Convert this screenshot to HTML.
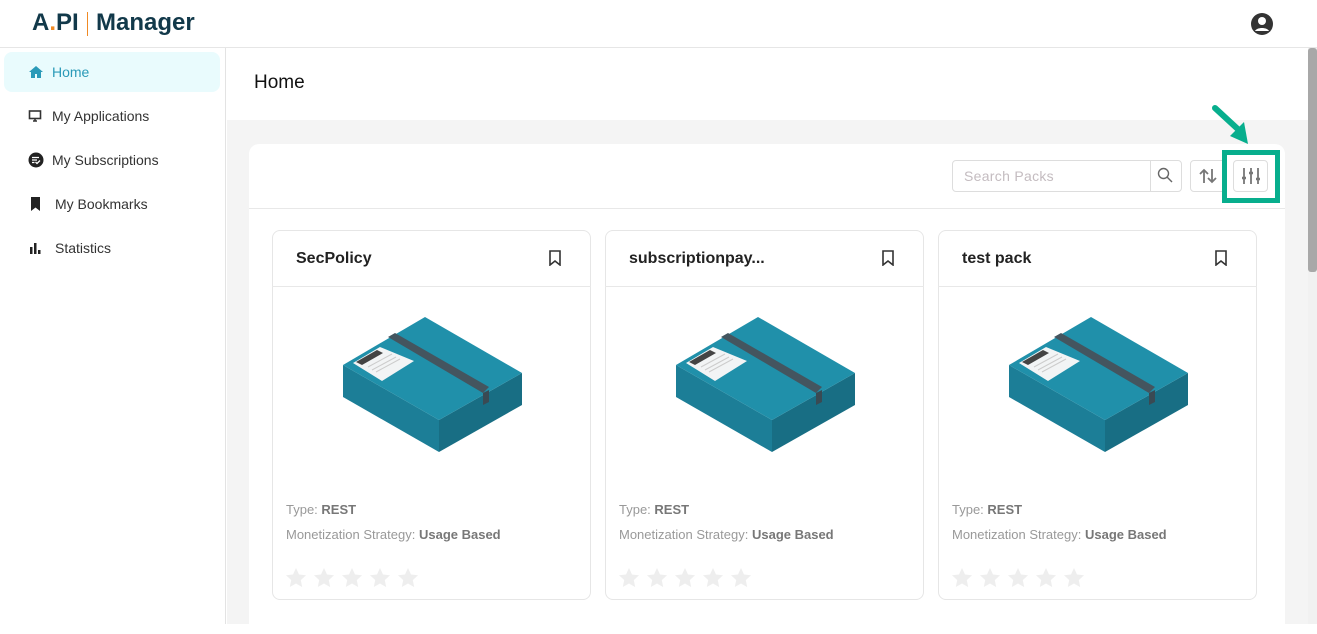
<!DOCTYPE html>
<html><head><style>
*{box-sizing:border-box;margin:0;padding:0}
body{width:1317px;height:624px;overflow:hidden;font-family:"Liberation Sans",sans-serif;background:#fff;position:relative;color:#222}
.top{position:absolute;left:0;top:0;width:1317px;height:48px;border-bottom:1px solid #e6e6e6;background:#fff}
.side{position:absolute;left:0;top:48px;width:226px;height:576px;border-right:1px solid #e3e3e3;background:#fff}
.nav{position:absolute;left:4px;width:216px;height:40px;font-size:14px;color:#333;display:flex;align-items:center}
.nav svg{position:absolute;left:24px}
.nav span{position:absolute;left:48px}
.main{position:absolute;left:227px;top:48px;width:1081px;height:576px;background:#f4f4f4}
.card{position:absolute;top:230px;width:319px;height:370px;background:#fff;border:1px solid #e6e6e6;border-radius:8px}
.card .h{position:absolute;left:0;top:0;width:100%;height:57px;border-bottom:1px solid #e8e8e8}
.card .t{position:absolute;left:24px;top:20px;font-size:16px;font-weight:bold;color:#222}
.card .bm{position:absolute;right:29px;top:20px}
.card .box{position:absolute;left:0;top:0}
.card .l1,.card .l2{position:absolute;left:14px;font-size:13px;color:#999}
.card .l1{top:272px}.card .l2{top:297px}
.card b{color:#777}
.stars{position:absolute;left:14px;top:338px;display:flex;gap:8px}
</style></head><body>
<div class="top">
 <div style="position:absolute;left:32px;top:9px;font-size:24px;font-weight:bold;color:#12394a">A<span style="color:#f08a24">.</span>PI</div>
 <div style="position:absolute;left:87px;top:12px;width:1px;height:24px;background:#f08a24"></div>
 <div style="position:absolute;left:96px;top:9px;font-size:24px;font-weight:bold;color:#12394a">Manager</div>
 <svg style="position:absolute;left:1250px;top:12px" width="24" height="24" viewBox="0 0 24 24"><circle cx="12" cy="12" r="11" fill="#333"/><circle cx="12" cy="9" r="4" fill="#fff"/><path d="M5 19c2-4 12-4 14 0" fill="#fff"/></svg>
</div>
<div class="side">
 <div class="nav" style="top:4px;background:#e9fbfd;border-radius:8px;color:#2a9ab8"><svg width="16" height="14" viewBox="0 0 16 14"><path d="M8 1L1 7h2v6h4V9h2v4h4V7h2z" fill="#2a9ab8"/></svg><span>Home</span></div>
 <div class="nav" style="top:48px"><svg width="14" height="14" viewBox="0 0 14 14"><rect x="1.5" y="2" width="11" height="7.5" fill="none" stroke="#333" stroke-width="1.6"/><path d="M5 12h4M7 9.5v2.5" stroke="#333" stroke-width="1.6"/></svg><span>My Applications</span></div>
 <div class="nav" style="top:92px"><svg width="16" height="16" viewBox="0 0 16 16"><circle cx="8" cy="8" r="7.5" fill="#222"/><path d="M4 5.5h7M4 8h5M4 10.5h2.5M7.5 10l1.5 1.5 3-3" stroke="#fff" stroke-width="1.3" fill="none"/></svg><span>My Subscriptions</span></div>
 <div class="nav" style="top:136px"><svg width="14" height="14" viewBox="0 0 14 14"><path d="M3 0h9v14l-4.5-3.5L3 14z" fill="#222"/></svg><span style="left:51px">My Bookmarks</span></div>
 <div class="nav" style="top:180px"><svg width="14" height="14" viewBox="0 0 14 14"><rect x="2" y="6" width="2.5" height="7" fill="#222"/><rect x="6" y="2" width="2.5" height="11" fill="#222"/><rect x="10" y="9" width="2.5" height="4" fill="#222"/></svg><span style="left:51px">Statistics</span></div>
</div>
<div class="main">
 <div style="position:absolute;left:0;top:0;width:1081px;height:72px;background:#fff"></div>
 <div style="position:absolute;left:27px;top:24px;font-size:19px;color:#111">Home</div>
 <div style="position:absolute;left:22px;top:96px;width:1036px;height:490px;background:#fff;border-radius:10px"></div>
 <div style="position:absolute;left:22px;top:160px;width:1036px;height:1px;background:#e8e8e8"></div>
</div>
<div style="position:absolute;left:1308px;top:48px;width:9px;height:576px;background:#f1f1f1"></div>
<div style="position:absolute;left:1308px;top:48px;width:9px;height:224px;background:#a8a8a8;border-radius:3px"></div>
<div style="position:absolute;left:952px;top:160px;width:230px;height:32px;border:1px solid #ddd;border-radius:4px;background:#fff"></div>
<div style="position:absolute;left:1150px;top:160px;width:1px;height:32px;background:#ddd"></div>
<div style="position:absolute;left:964px;top:168px;font-size:14px;color:#c4bcc0;letter-spacing:.3px">Search Packs</div>
<svg style="position:absolute;left:1157px;top:167px" width="16" height="16" viewBox="0 0 16 16"><circle cx="6.5" cy="6.5" r="5" fill="none" stroke="#666" stroke-width="1.4"/><path d="M10 10l5 5" stroke="#666" stroke-width="1.4"/></svg>
<div style="position:absolute;left:1190px;top:160px;width:36px;height:32px;border:1px solid #ddd;border-radius:4px;background:#fff"></div>
<svg style="position:absolute;left:1199px;top:168px" width="18" height="16" viewBox="0 0 18 16"><path d="M5 15V2M1 6l4-4 4 4M13 1v13M9 10l4 4 4-4" stroke="#777" stroke-width="1.8" fill="none"/></svg>
<div style="position:absolute;left:1222px;top:150px;width:58px;height:53px;border:5px solid #07ae8d"></div>
<div style="position:absolute;left:1233px;top:160px;width:35px;height:32px;border:1px solid #ddd;border-radius:4px"></div>
<svg style="position:absolute;left:1241px;top:167px" width="20" height="18" viewBox="0 0 20 18"><path d="M3 1v16M10 1v16M17 1v16" stroke="#777" stroke-width="1.8"/><path d="M1 11h4M8 6h4M15 12h4" stroke="#777" stroke-width="2.5"/></svg>
<svg style="position:absolute;left:1208px;top:100px" width="50" height="50" viewBox="0 0 50 50"><path d="M7 8l26 24" stroke="#07ae8d" stroke-width="6" stroke-linecap="round"/><path d="M40 44L22 36 36 22z" fill="#07ae8d"/></svg>
<div class="card" style="left:272px"></div>
<div class="card" style="left:605px"></div>
<div class="card" style="left:938px"></div>
<div id="cards"></div>
<script>
var names=["SecPolicy","subscriptionpay...","test pack"],xs=[272,605,938],h="";
var box='<svg class="box" width="319" height="370" viewBox="0 0 319 370"><g transform="translate(-272,-230)"><path d="M343 365L439 420L439 452L343 397Z" fill="#1c7e97"/><path d="M439 420L522 373L522 405L439 452Z" fill="#186e84"/><path d="M425 317L522 373L439 420L343 365Z" fill="#2090aa"/><path d="M388 337L395 333L489 387L483 393Z" fill="#44555f"/><path d="M483 393L489 390L489 402L483 405Z" fill="#3a4a53"/><path d="M353 363L380 347L414 361L382 381Z" fill="#f2f4f5"/><path d="M356 362L377 350L383 353L362 365Z" fill="#444"/><path d="M368 367L392 354M372 370L396 357M376 372L400 359" stroke="#ccc" stroke-width="1"/></g></svg>';
var star='<svg width="20" height="19" viewBox="0 0 20 19"><path d="M10 0l3 6.5 7 .8-5.2 4.8 1.4 7L10 15.5 3.8 19l1.4-7L0 7.3l7-.8z" fill="#eee"/></svg>';
for(var i=0;i<3;i++){h+='<div class="card" style="left:'+xs[i]+'px;border:none;background:transparent">'+box+'<div class="h"><div class="t">'+names[i]+'</div><svg class="bm" width="14" height="16" viewBox="0 0 14 16"><path d="M2 1h10v14l-5-4-5 4z" fill="none" stroke="#333" stroke-width="1.6"/></svg></div><div class="l1">Type: <b>REST</b></div><div class="l2">Monetization Strategy: <b>Usage Based</b></div><div class="stars">'+star+star+star+star+star+'</div></div>';}
document.getElementById("cards").innerHTML=h;
</script>
</body></html>
